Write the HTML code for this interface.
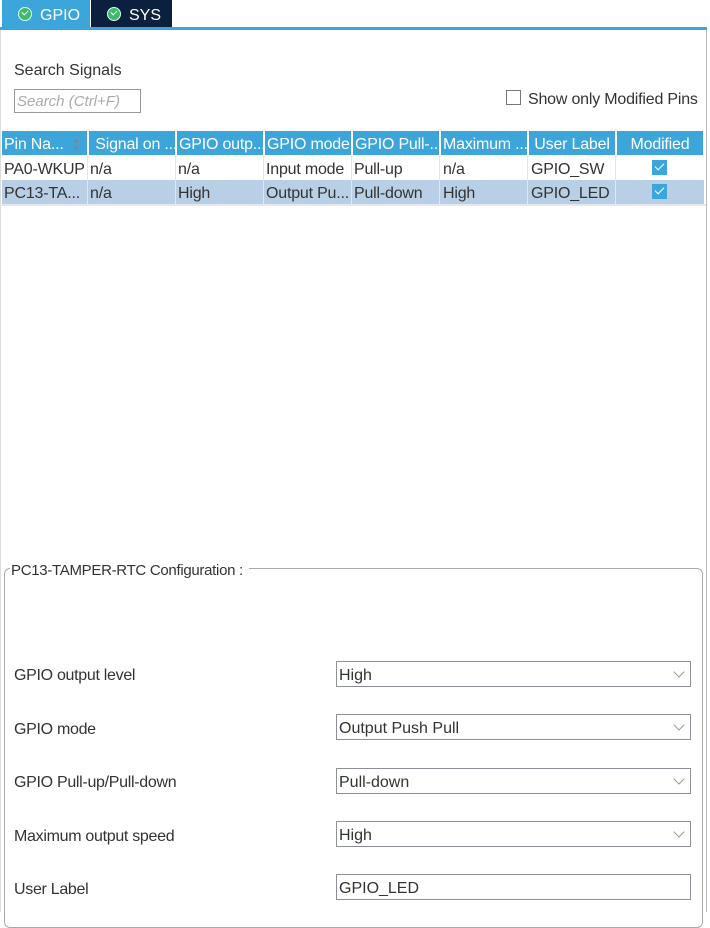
<!DOCTYPE html>
<html><head><style>
body{margin:0;width:710px;height:912px;background:#fff;font-family:"Liberation Sans",sans-serif;font-size:16px;color:#333;position:relative;overflow:hidden}
.a{position:absolute}
.tab{position:absolute;top:0;height:27px;color:#fff;font-size:16px;line-height:31px}
.ic{display:inline-block;width:12px;height:12px;border-radius:50%;background:#3dbb6a;border:1px solid #dfe;vertical-align:-1px;margin-right:8px;position:relative}
.ic:after{content:"";position:absolute;left:3px;top:2px;width:5px;height:3px;border-left:1.6px solid #fff;border-bottom:1.6px solid #fff;transform:rotate(-45deg)}
.cell{position:absolute;height:24px;line-height:28px;white-space:nowrap;overflow:hidden;padding-left:2px;box-sizing:border-box;letter-spacing:-0.2px}
.h{background:#3ca6da;color:#fff}
.cb{display:inline-block;width:15px;height:15px;background:#3ca6da;position:relative;vertical-align:-1px}
.cb:after{content:"";position:absolute;left:3px;top:3px;width:8px;height:4px;border-left:1.5px solid #fff;border-bottom:1.5px solid #fff;transform:rotate(-45deg)}
.lab{position:absolute;left:14px;font-size:16px;letter-spacing:-0.3px}
.sel{position:absolute;left:336px;width:355px;height:26px;border:1px solid #8a9096;box-sizing:border-box;line-height:27px;padding-left:2px;font-size:16px}
.sel .ch{position:absolute;right:7px;top:6px;width:7px;height:7px;border-right:1px solid #999;border-bottom:1px solid #999;transform:rotate(45deg)}
</style></head><body>
<div class="tab" style="left:2px;width:88px;background:#3ca6da;padding-left:16px;box-sizing:border-box"><span class="ic"></span>GPIO</div>
<div class="tab" style="left:91px;width:81px;background:#0b1f3e;padding-left:16px;box-sizing:border-box"><span class="ic"></span>SYS</div>
<div class="a" style="left:0;top:27px;width:707px;height:3px;background:#3ca6da"></div>
<div class="a" style="left:706px;top:30px;width:1px;height:882px;background:#bbb"></div>
<div class="a" style="left:0;top:30px;width:1px;height:882px;background:#ddd"></div>
<div class="a" style="left:14px;top:62px">Search Signals</div>
<div class="a" style="left:14px;top:89px;width:127px;height:24px;border:1px solid #999;box-sizing:border-box;color:#aaa;font-style:italic;line-height:24px;padding-left:2px;font-size:15px">Search (Ctrl+F)</div>
<div class="a" style="left:506px;top:90px;width:15px;height:15px;border:1px solid #777;box-sizing:border-box"></div>
<div class="a" style="left:528px;top:91px;letter-spacing:-0.2px">Show only Modified Pins</div>

<div class="a" style="left:2px;top:156px;width:702px;height:24px;background:#fff"></div>
<div class="a" style="left:2px;top:180px;width:702px;height:24px;background:#b8cfe6"></div>
<div class="a" style="left:0;top:204px;width:706px;height:2px;background:#e4e8ec"></div>

<div class="cell h" style="left:2px;top:131px;width:85px">Pin Na...<span style="position:absolute;left:70px;color:#6a8fae;font-size:9px;line-height:8px;top:5px">▲<br>▼</span></div>
<div class="cell h" style="left:89px;top:131px;width:86px">&nbsp;Signal on ...</div>
<div class="cell h" style="left:177px;top:131px;width:86px">GPIO outp...</div>
<div class="cell h" style="left:265px;top:131px;width:86px">GPIO mode</div>
<div class="cell h" style="left:353px;top:131px;width:86px">GPIO Pull-...</div>
<div class="cell h" style="left:441px;top:131px;width:86px">Maximum ...</div>
<div class="cell h" style="left:529px;top:131px;width:86px;text-align:center;padding:0">User Label</div>
<div class="cell h" style="left:617px;top:131px;width:86px;text-align:center;padding:0">Modified</div>

<div class="cell" style="left:2px;top:156px;width:86px">PA0-WKUP</div>
<div class="cell" style="left:88px;top:156px">n/a</div>
<div class="cell" style="left:176px;top:156px">n/a</div>
<div class="cell" style="left:264px;top:156px">Input mode</div>
<div class="cell" style="left:352px;top:156px">Pull-up</div>
<div class="cell" style="left:441px;top:156px">n/a</div>
<div class="cell" style="left:529px;top:156px">GPIO_SW</div>
<div class="a" style="left:652px;top:160px"><span class="cb"></span></div>

<div class="cell" style="left:2px;top:180px">PC13-TA...</div>
<div class="cell" style="left:88px;top:180px">n/a</div>
<div class="cell" style="left:176px;top:180px">High</div>
<div class="cell" style="left:264px;top:180px">Output Pu...</div>
<div class="cell" style="left:352px;top:180px">Pull-down</div>
<div class="cell" style="left:441px;top:180px">High</div>
<div class="cell" style="left:529px;top:180px">GPIO_LED</div>
<div class="a" style="left:652px;top:184px"><span class="cb"></span></div>
<div class="a" style="left:87px;top:156px;width:1px;height:48px;background:#e4e8ec"></div>
<div class="a" style="left:175px;top:156px;width:1px;height:48px;background:#e4e8ec"></div>
<div class="a" style="left:263px;top:156px;width:1px;height:48px;background:#e4e8ec"></div>
<div class="a" style="left:351px;top:156px;width:1px;height:48px;background:#e4e8ec"></div>
<div class="a" style="left:439px;top:156px;width:1px;height:48px;background:#e4e8ec"></div>
<div class="a" style="left:527px;top:156px;width:1px;height:48px;background:#e4e8ec"></div>
<div class="a" style="left:615px;top:156px;width:1px;height:48px;background:#e4e8ec"></div>

<div class="a" style="left:4px;top:568px;width:699px;height:360px;border:1px solid #aaa;border-radius:6px;box-sizing:border-box"></div>
<div class="a" style="left:10px;top:562px;background:#fff;padding:0 6px 0 1px;font-size:15px;letter-spacing:-0.3px">PC13-TAMPER-RTC Configuration :</div>

<div class="lab" style="top:667px">GPIO output level</div>
<div class="sel" style="top:661px">High<span class="ch"></span></div>
<div class="lab" style="top:721px">GPIO mode</div>
<div class="sel" style="top:714px">Output Push Pull<span class="ch"></span></div>
<div class="lab" style="top:774px">GPIO Pull-up/Pull-down</div>
<div class="sel" style="top:768px">Pull-down<span class="ch"></span></div>
<div class="lab" style="top:828px">Maximum output speed</div>
<div class="sel" style="top:821px">High<span class="ch"></span></div>
<div class="lab" style="top:881px">User Label</div>
<div class="sel" style="top:874px">GPIO_LED</div>
</body></html>
